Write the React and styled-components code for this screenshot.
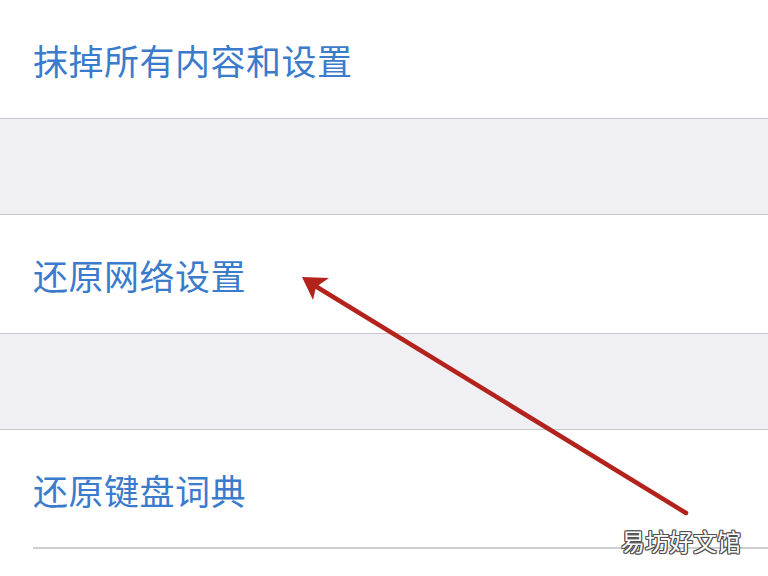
import React from "react";
import styled, { createGlobalStyle } from "styled-components";

const Global = createGlobalStyle`
  html, body { margin: 0; padding: 0; background: #ffffff; }
  body { font-family: "Noto Sans CJK SC", "Noto Sans", sans-serif; }
`;

const Page = styled.div`
  position: relative;
  width: 768px;
  height: 576px;
  overflow: hidden;
  background: #ffffff;
`;

const Row = styled.div`
  height: 119px;
  box-sizing: border-box;
  display: flex;
  align-items: center;
  padding-left: 33px;
  background: #ffffff;
  border-bottom: ${(p) => (p.$inset ? "none" : "1px solid #c8c7cc")};
  position: relative;
  &::after {
    content: "";
    display: ${(p) => (p.$inset ? "block" : "none")};
    position: absolute;
    left: 33px;
    right: 0;
    bottom: 0;
    height: 2px;
    background: #cfcfd2;
  }
`;

const Label = styled.span`
  font-size: 35px;
  color: #3a7bcc;
  letter-spacing: 0.5px;
  line-height: 1;
`;

const Gap = styled.div`
  height: 96px;
  box-sizing: border-box;
  background: #efeff4;
  border-bottom: 1px solid #c8c7cc;
`;

const Overlay = styled.svg`
  position: absolute;
  left: 0;
  top: 0;
  pointer-events: none;
`;

const Watermark = styled.div`
  position: absolute;
  left: 621px;
  top: 527px;
  font-size: 24px;
  line-height: 1.2;
  color: #ffffff;
  text-shadow:
    1px 0 0 #505050, -1px 0 0 #505050, 0 1px 0 #505050, 0 -1px 0 #505050,
    1px 1px 0 #505050, -1px -1px 0 #505050, 1px -1px 0 #505050, -1px 1px 0 #505050;
  font-family: "Noto Sans CJK SC", sans-serif;
`;

export default function App() {
  return (
    <>
      <Global />
      <Page>
        <Row>
          <Label>抹掉所有内容和设置</Label>
        </Row>
        <Gap />
        <Row>
          <Label>还原网络设置</Label>
        </Row>
        <Gap />
        <Row $inset>
          <Label>还原键盘词典</Label>
        </Row>
        <Overlay width="768" height="576" viewBox="0 0 768 576">
          <line x1="686" y1="513" x2="312" y2="284" stroke="#b3221b" strokeWidth="4.5" strokeLinecap="round" />
          <polygon points="302,277 329,278 316,287 313,300" fill="#b3221b" />
        </Overlay>
        <Watermark>易坊好文馆</Watermark>
      </Page>
    </>
  );
}
